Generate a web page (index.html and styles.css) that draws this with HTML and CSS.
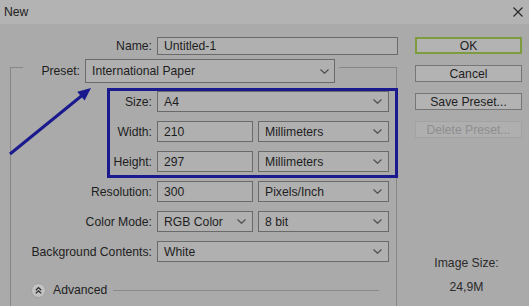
FILE: index.html
```html
<!DOCTYPE html>
<html>
<head>
<meta charset="utf-8">
<link rel="stylesheet" href="styles.css">
</head>
<body>
<div class="dialog">
  <div class="titlebar">
    <span class="title">New</span>
    <svg class="close" width="10" height="10" viewBox="0 0 10 10"><path d="M0.5 0.5L9.5 9.5M9.5 0.5L0.5 9.5" stroke="#2a2a2a" stroke-width="1.2" fill="none"/></svg>
  </div>
  <div class="main">
    <div class="left">
      <div class="name-row">
        <span class="label">Name:</span>
        <div class="field name-field">Untitled-1</div>
      </div>
      <div class="group">
        <div class="preset-row">
          <span class="label">Preset:</span>
          <div class="field select preset-select"><span>International Paper</span><svg class="chev" width="9" height="5" viewBox="0 0 9 5"><path d="M0.5 0.5L4.5 4.3L8.5 0.5" stroke="#505050" stroke-width="1.2" fill="none"/></svg></div>
        </div>
        <div class="form-grid">
          <span class="label">Size:</span>
          <div class="field select span2"><span>A4</span><svg class="chev" width="9" height="5" viewBox="0 0 9 5"><path d="M0.5 0.5L4.5 4.3L8.5 0.5" stroke="#505050" stroke-width="1.2" fill="none"/></svg></div>

          <span class="label">Width:</span>
          <div class="field">210</div>
          <div class="field select"><span>Millimeters</span><svg class="chev" width="9" height="5" viewBox="0 0 9 5"><path d="M0.5 0.5L4.5 4.3L8.5 0.5" stroke="#505050" stroke-width="1.2" fill="none"/></svg></div>

          <span class="label">Height:</span>
          <div class="field">297</div>
          <div class="field select"><span>Millimeters</span><svg class="chev" width="9" height="5" viewBox="0 0 9 5"><path d="M0.5 0.5L4.5 4.3L8.5 0.5" stroke="#505050" stroke-width="1.2" fill="none"/></svg></div>

          <span class="label">Resolution:</span>
          <div class="field">300</div>
          <div class="field select"><span>Pixels/Inch</span><svg class="chev" width="9" height="5" viewBox="0 0 9 5"><path d="M0.5 0.5L4.5 4.3L8.5 0.5" stroke="#505050" stroke-width="1.2" fill="none"/></svg></div>

          <span class="label">Color Mode:</span>
          <div class="field select"><span>RGB Color</span><svg class="chev" width="9" height="5" viewBox="0 0 9 5"><path d="M0.5 0.5L4.5 4.3L8.5 0.5" stroke="#505050" stroke-width="1.2" fill="none"/></svg></div>
          <div class="field select"><span>8 bit</span><svg class="chev" width="9" height="5" viewBox="0 0 9 5"><path d="M0.5 0.5L4.5 4.3L8.5 0.5" stroke="#505050" stroke-width="1.2" fill="none"/></svg></div>

          <span class="label">Background Contents:</span>
          <div class="field select span2"><span>White</span><svg class="chev" width="9" height="5" viewBox="0 0 9 5"><path d="M0.5 0.5L4.5 4.3L8.5 0.5" stroke="#505050" stroke-width="1.2" fill="none"/></svg></div>
        </div>
        <div class="advanced">
          <svg class="adv-icon" width="15" height="15" viewBox="0 0 15 15"><circle cx="7.5" cy="7.5" r="7" fill="#c2c2c2" stroke="#9a9a9a" stroke-width="0.8"/><path d="M4.8 7.2L7.5 4.6L10.2 7.2M4.8 10.4L7.5 7.8L10.2 10.4" stroke="#2a2a2a" stroke-width="1.3" fill="none"/></svg>
          <span class="adv-text">Advanced</span>
          <span class="adv-line"></span>
        </div>
      </div>
    </div>
    <div class="right">
      <div class="btn btn-ok">OK</div>
      <div class="btn">Cancel</div>
      <div class="btn">Save Preset...</div>
      <div class="btn btn-disabled">Delete Preset...</div>
      <div class="info">
        <div>Image Size:</div>
        <div>24,9M</div>
      </div>
    </div>
  </div>
  <div class="highlight"></div>
  <svg class="arrow" width="529" height="306" viewBox="0 0 529 306">
    <line x1="10" y1="154" x2="82" y2="95.5" stroke="#1a1a8e" stroke-width="3"/>
    <polygon points="91,88 84.6,100.6 77.2,91.8" fill="#1a1a8e"/>
  </svg>
</div>
</body>
</html>
```
FILE: styles.css
```css
* { box-sizing: border-box; }
html, body { margin: 0; padding: 0; background: #aaaaaa; }
body {
  font-family: "Liberation Sans", Arial, sans-serif;
  font-size: 12.2px;
  color: #1e1e1e;
}
.dialog {
  position: relative;
  width: 529px;
  height: 306px;
  overflow: hidden;
  background: #aaaaaa;
}
.titlebar {
  height: 24px;
  background: #b3b3b3;
  display: flex;
  align-items: center;
  justify-content: space-between;
  padding: 0 6px 0 4px;
}
.title { font-size: 12.2px; color: #222; }
.close { display: block; }
.main {
  display: flex;
  padding-top: 13px;
}
.left { width: 398px; flex: none; }
.label { text-align: right; white-space: nowrap; color: #1e1e1e; }
.field {
  background: #b0b0b0;
  border: 1px solid #6a6a6a;
  padding: 0 6px;
  display: flex;
  align-items: center;
  white-space: nowrap;
  color: #1e1e1e;
}
.select { justify-content: space-between; padding-right: 6px; }
.chev { display: block; flex: none; }
.name-row {
  display: grid;
  grid-template-columns: 152px 241px;
  column-gap: 5px;
  height: 18px;
  align-items: center;
}
.name-field { height: 18px; }
.group {
  margin: 12px 0 0 10px;
  width: 387px;
  height: 260px;
  border: 1px solid #878787;
  border-bottom: none;
}
.preset-row {
  margin: -9px 0 0 12px;
  width: 316px;
  height: 24px;
  padding-right: 4px;
  display: flex;
  align-items: center;
  gap: 5px;
  background: #aaaaaa;
}
.preset-row .label { flex: 1; }
.preset-select { width: 250px; height: 24px; flex: none; padding-right: 5px; }
.form-grid {
  margin-top: 8px;
  display: grid;
  grid-template-columns: 141px 96px 131px;
  grid-auto-rows: 21px;
  column-gap: 5px;
  row-gap: 9px;
  align-items: center;
}
.form-grid .field { height: 21px; }
.span2 { grid-column: span 2; }
.advanced {
  margin-top: 20px;
  height: 16px;
  display: flex;
  align-items: center;
  padding-left: 20px;
  padding-right: 17px;
}
.adv-icon { display: block; flex: none; }
.adv-text { margin-left: 7px; }
.adv-line {
  flex: 1;
  height: 1px;
  background: #8a8a8a;
  margin-left: 6px;
}
.right {
  margin-left: 17px;
  width: 107px;
  display: flex;
  flex-direction: column;
  gap: 11px;
}
.btn {
  height: 17px;
  background: #b3b3b3;
  border: 1px solid #767676;
  display: flex;
  align-items: center;
  justify-content: center;
  color: #1e1e1e;
  white-space: nowrap;
}
.btn-ok { border: 2px solid #7e9c3e; }
.btn-disabled { color: #8e8e8e; border-color: #a2a2a2; background: #afafaf; }
.info {
  margin-top: 102px;
  text-align: center;
  line-height: 24px;
  color: #2a2a2a;
  padding-right: 4px;
}
.highlight {
  position: absolute;
  left: 107px;
  top: 88px;
  width: 291px;
  height: 90px;
  border: 3px solid #1a1a8e;
  pointer-events: none;
}
.arrow {
  position: absolute;
  left: 0;
  top: 0;
  pointer-events: none;
}
```
